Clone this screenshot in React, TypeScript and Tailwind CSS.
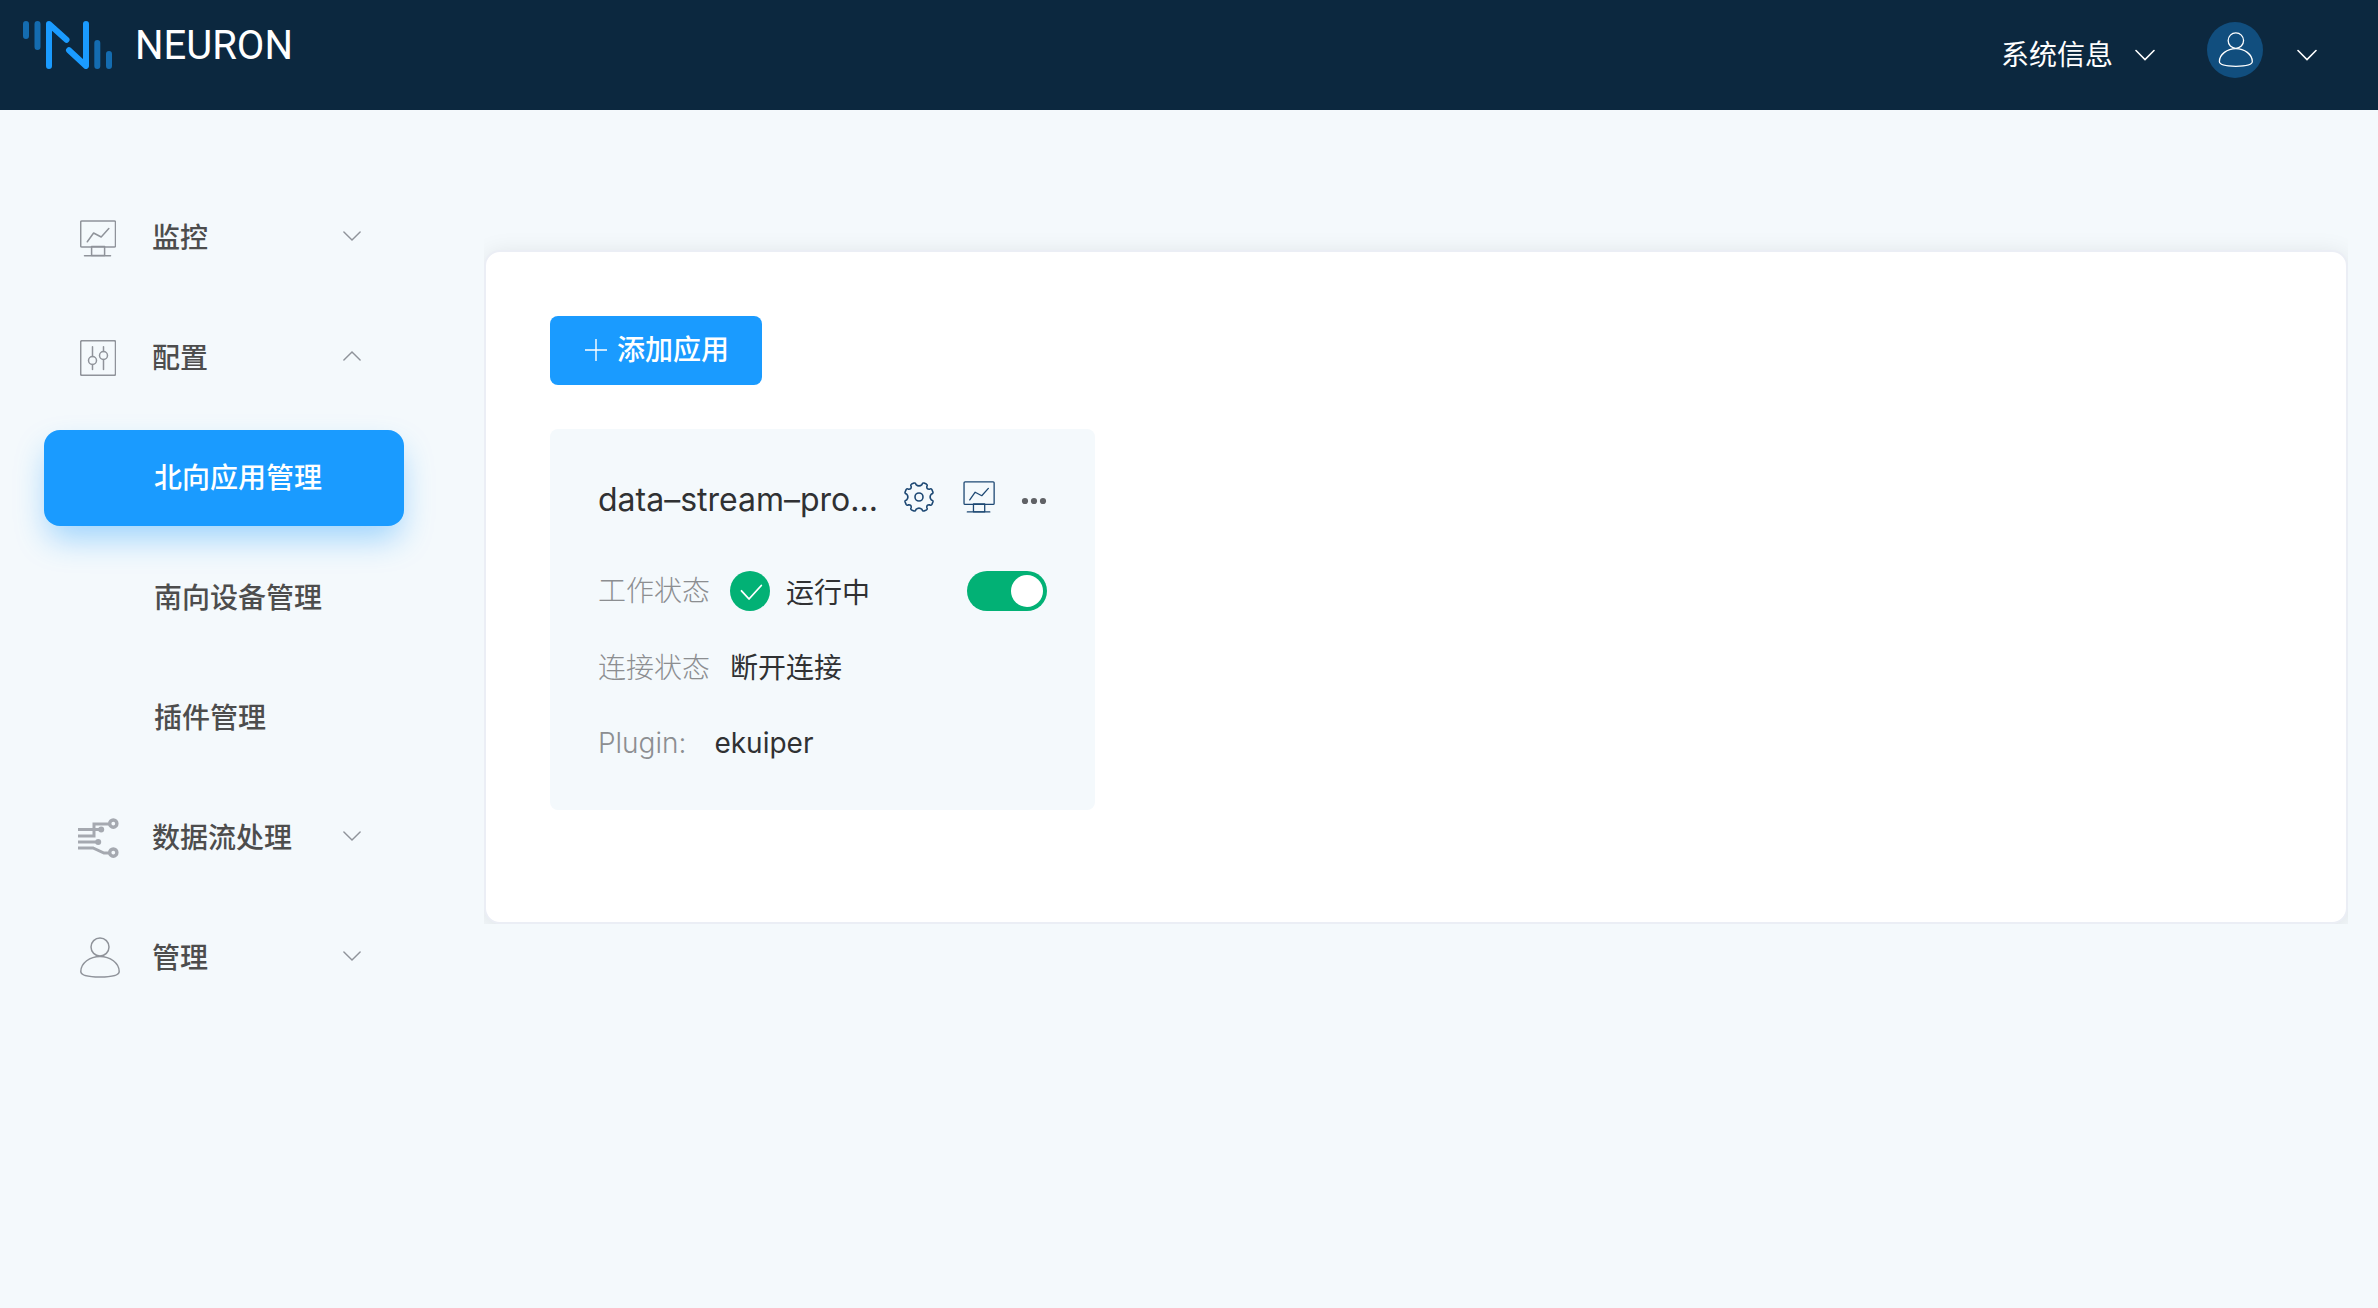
import { useState } from "react";
import type { ReactNode } from "react";

type MenuItem = {
  id: string;
  label: string;
  icon: ReactNode;
  children?: { id: string; label: string }[];
};

// ############ ICONS ##########

function Logo() {
  return (
    <svg width="90" height="48" viewBox="0 0 90 48" fill="none" strokeWidth="6" strokeLinecap="round" aria-hidden="true">
      <g stroke="#146cb0">
        <path d="M3 3V15M14.5 3V26M74.3 22V45M86 33V45" />
      </g>
      <g stroke="#1a9bff" strokeLinejoin="round">
        <path d="M26 45V3L43.5 18.8" />
        <path d="M46 29.3L63 45V3" />
      </g>
    </svg>
  );
}

function MonitorIcon({ className }: { className?: string }) {
  return (
    <svg className={className} viewBox="0 0 36 37" fill="none" stroke="currentColor" strokeWidth="1.5" strokeLinecap="round" strokeLinejoin="round" aria-hidden="true">
      <rect x="0.7" y="0.9" width="34.8" height="26.2" rx="1.2" />
      <rect x="11.6" y="26.6" width="13" height="9" />
      <path d="M4.5 35.8H30.5M7.3 21.8L13.6 13L21.2 17L28.8 8.6" />
    </svg>
  );
}

function SlidersIcon({ className }: { className?: string }) {
  return (
    <svg className={className} viewBox="0 0 36 36" fill="none" stroke="currentColor" strokeWidth="1.5" strokeLinecap="round" aria-hidden="true">
      <rect x="0.7" y="0.7" width="34.8" height="34.6" rx="1.2" />
      <circle cx="12.5" cy="20.5" r="4" />
      <circle cx="23.5" cy="15.5" r="4" />
      <path d="M12.5 6.8V16.5M12.5 24.5V29.4M23.5 6.8V11.5M23.5 19.5V29.4" />
    </svg>
  );
}

function StreamIcon({ className }: { className?: string }) {
  return (
    <svg className={className} viewBox="0 0 42 42" fill="none" stroke="#a5a9b0" strokeWidth="3" aria-hidden="true">
      <path d="M0 19H16V7H31M0 12.5H21M0 25H18M0 31H15L26 36H31" />
      <circle cx="35.3" cy="6.6" r="3.6" strokeWidth="3.4" />
      <circle cx="35.3" cy="35.6" r="3.6" strokeWidth="3.4" />
      <circle cx="23.2" cy="12.5" r="3" fill="#a5a9b0" stroke="none" />
      <circle cx="20.2" cy="25" r="3" fill="#a5a9b0" stroke="none" />
    </svg>
  );
}

function UserIcon({ className }: { className?: string }) {
  return (
    <svg className={className} viewBox="0 0 42 42" fill="none" stroke="currentColor" strokeWidth="1.5" aria-hidden="true">
      <circle cx="22" cy="10" r="9" />
      <path d="M22 19.4C32 19.4 41.2 26 41.2 34.5C41.2 38.4 34 40 22 40S2.8 38.4 2.8 34.5C2.8 26 12 19.4 22 19.4Z" />
    </svg>
  );
}

function Chevron({ up, className }: { up?: boolean; className?: string }) {
  return (
    <svg className={className} viewBox="0 0 20 12" fill="none" stroke="currentColor" strokeWidth="1.6" strokeLinecap="round" aria-hidden="true">
      <path d={up ? "M1 10.5L10 1.5L19 10.5" : "M1 1.5L10 10.5L19 1.5"} />
    </svg>
  );
}

function GearIcon() {
  return (
    <svg className="size-8" viewBox="0 0 32 32" fill="none" stroke="currentColor" strokeWidth="1.6" strokeLinejoin="round" aria-hidden="true">
      <circle cx="16" cy="16" r="4" />
      <path d="M13 3.6Q16 6.2 19 3.6Q19.6 1.6 21 2.1L23.4 3.1Q24.8 3.8 23.8 5.6Q23.6 8.4 26.4 8.2Q28.2 7.2 28.9 8.6L29.9 11Q30.4 12.4 28.4 13Q25.8 16 28.4 19Q30.4 19.6 29.9 21L28.9 23.4Q28.2 24.8 26.4 23.8Q23.6 23.6 23.8 26.4Q24.8 28.2 23.4 28.9L21 29.9Q19.6 30.4 19 28.4Q16 25.8 13 28.4Q12.4 30.4 11 29.9L8.6 28.9Q7.2 28.2 8.2 26.4Q8.4 23.6 5.6 23.8Q3.8 24.8 3.1 23.4L2.1 21Q1.6 19.6 3.6 19Q6.2 16 3.6 13Q1.6 12.4 2.1 11L3.1 8.6Q3.8 7.2 5.6 8.2Q8.4 8.4 8.2 5.6Q7.2 3.8 8.6 3.1L11 2.1Q12.4 1.6 13 3.6Z" />
    </svg>
  );
}

const menu: MenuItem[] = [
  { id: "monitor", label: "监控", icon: <MonitorIcon className="ml-0.5 h-[37px] w-9" /> },
  {
    id: "config",
    label: "配置",
    icon: <SlidersIcon className="ml-0.5 size-9" />,
    children: [
      { id: "north", label: "北向应用管理" },
      { id: "south", label: "南向设备管理" },
      { id: "plugin", label: "插件管理" },
    ],
  },
  { id: "stream", label: "数据流处理", icon: <StreamIcon className="size-10.5" /> },
  { id: "admin", label: "管理", icon: <UserIcon className="size-10.5" /> },
];

function Header() {
  return (
    <header className="flex h-[110px] items-start justify-between bg-[#0c283f] pl-[23px] pr-[61px] text-white">
      <a href="#" className="flex items-start pt-[21px]">
        <Logo />
        <span className="ml-[22px] font-[Roboto,sans-serif] text-[40px] leading-[50px]">NEURON</span>
      </a>
      <div className="flex items-start pt-[22px]">
        <button type="button" className="flex items-center gap-[22px] pt-[13px] text-[28px] leading-10">
          系统信息
          <Chevron className="h-3 w-5" />
        </button>
        <button type="button" aria-label="用户" className="ml-[52px] flex items-center gap-[34px]">
          <span className="flex size-14 items-center justify-center rounded-full bg-[#114e7e]">
            <UserIcon className="size-9" />
          </span>
          <Chevron className="mt-2.5 h-3 w-5" />
        </button>
      </div>
    </header>
  );
}

function Sidebar() {
  const [open, setOpen] = useState("config");
  const [active, setActive] = useState("north");

  return (
    <nav className="w-[360px] shrink-0 pt-20 text-[28px] font-medium text-[#4d4d4d]">
      <ul className="flex flex-col gap-6">
        {menu.map((item) => (
          <li key={item.id} className="flex flex-col gap-6">
            <button
              type="button"
              className="flex h-24 w-full items-center pl-[34px] pr-[43px]"
              onClick={() => setOpen(open === item.id ? "" : item.id)}
            >
              <span className="mr-8 flex w-[42px] text-[#8f939a]">{item.icon}</span>
              {item.label}
              <Chevron up={open === item.id} className="mb-1 ml-auto h-3 w-[18px] text-[#8f939a]" />
            </button>
            {item.children && open === item.id && (
              <ul className="flex flex-col gap-6">
                {item.children.map((child) => (
                  <li key={child.id}>
                    <a
                      href="#"
                      onClick={() => setActive(child.id)}
                      className={`flex h-24 items-center rounded-2xl pl-[110px] ${
                        active === child.id ? "bg-[#1a9bff] text-white shadow-[0_16px_32px_-4px_rgba(26,155,255,0.4)]" : ""
                      }`}
                    >
                      {child.label}
                    </a>
                  </li>
                ))}
              </ul>
            )}
          </li>
        ))}
      </ul>
    </nav>
  );
}

function AppCard() {
  const [running, setRunning] = useState(true);

  return (
    <article className="rounded-lg bg-[#f4f9fc] px-12 pb-[47px] pt-12 text-[28px] leading-10 text-[#303133]">
      <div className="flex h-11 items-start">
        <h2 className="flex-1 whitespace-nowrap text-[32px] leading-[46px]">data–stream–pro...</h2>
        <div className="flex items-center pt-1 text-[#1d4873]">
          <button type="button" aria-label="配置">
            <GearIcon />
          </button>
          <button type="button" aria-label="监控" className="ml-7">
            <MonitorIcon className="size-8" />
          </button>
          <button type="button" aria-label="更多" className="ml-[26px] mt-2 text-[#606266]">
            <svg width="26" height="8" viewBox="0 0 26 8" fill="currentColor" aria-hidden="true">
              <circle cx="4" cy="4" r="3.1" />
              <circle cx="13" cy="4" r="3.1" />
              <circle cx="22" cy="4" r="3.1" />
            </svg>
          </button>
        </div>
      </div>

      <dl className="mt-12 flex flex-col gap-[35px]">
        <div className="flex h-11 items-center">
          <dt className="font-light text-[#8c8e91]">工作状态</dt>
          <dd className="ml-5 flex flex-1 items-center">
            <svg width="40" height="40" viewBox="0 0 40 40" fill="none" aria-hidden="true">
              <circle cx="20" cy="20" r="20" fill="#02b175" />
              <path d="M11.5 19.8L19 28L31.3 14.5" stroke="#fff" strokeWidth="1.8" strokeLinecap="round" strokeLinejoin="round" />
            </svg>
            <span className="ml-4 pt-1">运行中</span>
            <label className="relative ml-auto block h-10 w-20">
              <input
                type="checkbox"
                role="switch"
                aria-label="运行"
                className="peer block h-10 w-20 cursor-pointer appearance-none rounded-full bg-gray-300 checked:bg-[#02b175]"
                checked={running}
                onChange={(e) => setRunning(e.target.checked)}
              />
              <span className="pointer-events-none absolute left-1 top-1 size-8 rounded-full bg-white peer-checked:left-11" />
            </label>
          </dd>
        </div>
        <div className="flex items-center">
          <dt className="font-light text-[#8c8e91]">连接状态</dt>
          <dd className="ml-5">断开连接</dd>
        </div>
        <div className="flex items-center">
          <dt className="font-light text-[#8c8e91]">Plugin:</dt>
          <dd className="ml-7">ekuiper</dd>
        </div>
      </dl>
    </article>
  );
}

export default function App() {
  return (
    <div className="min-h-screen bg-[#f4f9fc] font-[Inter,'Noto_Sans_CJK_SC',sans-serif]">
      <Header />
      <div className="flex gap-20 pl-11 pr-[30px]">
        <Sidebar />
        <main className="min-w-0 flex-1 self-start overflow-hidden pt-[140px]">
          <section className="rounded-2xl border-2 border-[#ebeef5] bg-white px-16 pb-[112px] pt-16 shadow-[0_4px_24px_rgba(0,0,0,0.1)]">
            <button
              type="button"
              className="flex h-[69px] w-[212px] items-center rounded-lg bg-[#1a9bff] pb-0.5 pl-[35px] text-[28px] font-medium text-white"
            >
              <svg width="22" height="22" viewBox="0 0 22 22" stroke="currentColor" strokeWidth="1.4" aria-hidden="true">
                <path d="M11 0V22M0 11H22" />
              </svg>
              <span className="ml-2.5">添加应用</span>
            </button>
            <div className="mt-11 grid grid-cols-3 gap-12">
              <AppCard />
            </div>
          </section>
        </main>
      </div>
    </div>
  );
}
